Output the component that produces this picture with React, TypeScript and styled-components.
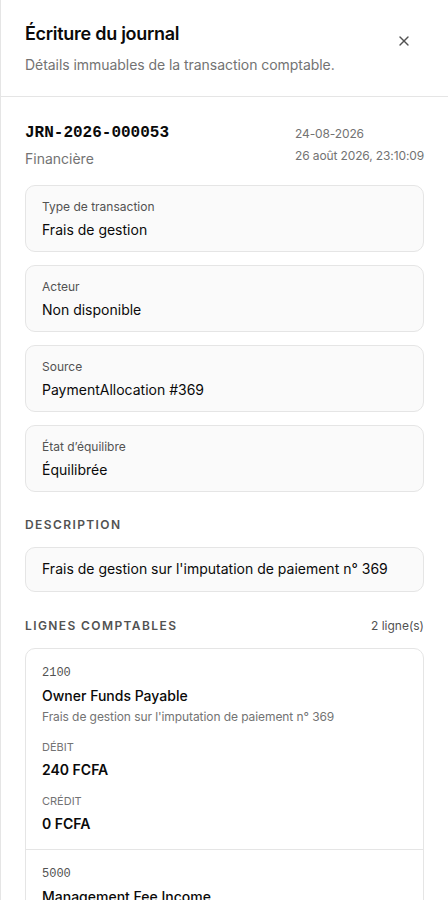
import React from "react";
import styled, { createGlobalStyle } from "styled-components";

const Global = createGlobalStyle`
  html, body { margin: 0; padding: 0; background: #ffffff; }
  body { font-family: Inter, "Noto Sans", sans-serif; color: #0a0a0a; -webkit-font-smoothing: antialiased; }
  * { box-sizing: border-box; }
`;

const Panel = styled.div`
  width: 448px;
  min-height: 900px;
  border-left: 1px solid #e5e5e5;
  background: #ffffff;
`;

const Header = styled.header`
  display: flex;
  justify-content: space-between;
  align-items: flex-start;
  padding: 20px 24px 21px 24px;
  border-bottom: 1px solid #e5e5e5;
`;

const HeaderText = styled.div`
  display: flex;
  flex-direction: column;
  gap: 7px;
`;

const Title = styled.h2`
  margin: 0;
  font-size: 18px;
  line-height: 28px;
  font-weight: 600;
  color: #0a0a0a;
  letter-spacing: -0.28px;
`;

const Subtitle = styled.p`
  margin: 0;
  font-size: 14px;
  line-height: 20px;
  color: #737373;
  letter-spacing: -0.05px;
`;

const CloseButton = styled.button`
  border: none;
  background: transparent;
  padding: 0;
  margin-top: 12px;
  margin-right: 11px;
  width: 18px;
  height: 18px;
  display: flex;
  align-items: center;
  justify-content: center;
  color: #525252;
  cursor: pointer;
`;

const Body = styled.div`
  padding: 24px 24px 24px 24px;
  display: flex;
  flex-direction: column;
`;

const TopRow = styled.div`
  display: flex;
  justify-content: space-between;
  align-items: flex-start;
  margin-bottom: 16px;
`;

const RefCol = styled.div`
  display: flex;
  flex-direction: column;
  gap: 4px;
`;

const DateCol = styled.div`
  display: flex;
  flex-direction: column;
  gap: 4px;
  padding-top: 4px;
`;

const Ref = styled.div`
  font-family: "Liberation Mono", "DejaVu Sans Mono", monospace;
  font-weight: 700;
  font-size: 16px;
  line-height: 24px;
  color: #0a0a0a;
`;

const Muted = styled.div`
  font-size: 14px;
  line-height: 20px;
  color: #737373;
`;

const DateText = styled.div`
  font-size: 12px;
  line-height: 18px;
  color: #737373;
  letter-spacing: -0.12px;
`;

const Stack = styled.div`
  display: flex;
  flex-direction: column;
  gap: 13px;
`;

const InfoCard = styled.div`
  border: 1px solid #e5e5e5;
  border-radius: 10px;
  background: #fafafa;
  padding: 13px 16px 11px;
  display: flex;
  flex-direction: column;
  gap: 5px;
`;

const InfoLabel = styled.div`
  font-size: 12px;
  line-height: 16px;
  color: #525252;
`;

const InfoValue = styled.div`
  font-size: 14px;
  line-height: 20px;
  color: #0a0a0a;
`;

const Section = styled.section<{ $top: number }>`
  margin-top: ${(p) => p.$top}px;
  display: flex;
  flex-direction: column;
  gap: 14px;
`;

const SectionHead = styled.div`
  display: flex;
  justify-content: space-between;
  align-items: center;
`;

const SectionTitle = styled.div`
  font-size: 12px;
  line-height: 16px;
  font-weight: 600;
  letter-spacing: 1.4px;
  text-transform: uppercase;
  color: #525252;
`;

const Count = styled.div`
  font-size: 12px;
  line-height: 16px;
  color: #525252;
`;

const DescBox = styled.div`
  border: 1px solid #e5e5e5;
  border-radius: 10px;
  background: #fafafa;
  padding: 11px 16px 12px;
  font-size: 14px;
  line-height: 20px;
  color: #0a0a0a;
`;

const LinesCard = styled.div`
  border: 1px solid #e5e5e5;
  border-radius: 10px;
  background: #ffffff;
  overflow: hidden;
`;

const LineItem = styled.div`
  padding: 16px 16px 15px;
  display: flex;
  flex-direction: column;
  & + & { border-top: 1px solid #e5e5e5; }
`;

const Code = styled.div`
  font-family: "Liberation Mono", "DejaVu Sans Mono", monospace;
  font-size: 12px;
  line-height: 16px;
  color: #525252;
`;

const Account = styled.div`
  margin-top: 5px;
  font-size: 14px;
  line-height: 20px;
  font-weight: 500;
  color: #0a0a0a;
`;

const LineDesc = styled.div`
  margin-top: 3px;
  font-size: 12px;
  line-height: 16px;
  color: #737373;
  letter-spacing: -0.08px;
`;

const Amounts = styled.div`
  margin-top: 14px;
  display: flex;
  flex-direction: column;
  gap: 13px;
`;

const AmountBlock = styled.div`
  display: flex;
  flex-direction: column;
  gap: 5px;
`;

const AmountLabel = styled.div`
  font-size: 11px;
  line-height: 16px;
  text-transform: uppercase;
  color: #737373;
`;

const AmountValue = styled.div`
  font-size: 14px;
  line-height: 20px;
  font-weight: 600;
  color: #0a0a0a;
`;

const info = [
  { label: "Type de transaction", value: "Frais de gestion" },
  { label: "Acteur", value: "Non disponible" },
  { label: "Source", value: "PaymentAllocation #369" },
  { label: "État d’équilibre", value: "Équilibrée" },
];

const lines = [
  {
    code: "2100",
    account: "Owner Funds Payable",
    desc: "Frais de gestion sur l'imputation de paiement n° 369",
    debit: "240 FCFA",
    credit: "0 FCFA",
  },
  {
    code: "5000",
    account: "Management Fee Income",
    desc: "Frais de gestion sur l'imputation de paiement n° 369",
    debit: "0 FCFA",
    credit: "240 FCFA",
  },
];

export default function App() {
  return (
    <>
      <Global />
      <Panel>
        <Header>
          <HeaderText>
            <Title>Écriture du journal</Title>
            <Subtitle>Détails immuables de la transaction comptable.</Subtitle>
          </HeaderText>
          <CloseButton aria-label="Fermer">
            <svg width="16" height="16" viewBox="0 0 24 24" fill="none" stroke="currentColor" strokeWidth="2" strokeLinecap="round" strokeLinejoin="round">
              <path d="M18 6 6 18" />
              <path d="m6 6 12 12" />
            </svg>
          </CloseButton>
        </Header>
        <Body>
          <TopRow>
            <RefCol>
              <Ref>JRN-2026-000053</Ref>
              <Muted>Financière</Muted>
            </RefCol>
            <DateCol>
              <DateText>24-08-2026</DateText>
              <DateText>26 août 2026, 23:10:09</DateText>
            </DateCol>
          </TopRow>
          <Stack>
            {info.map((i) => (
              <InfoCard key={i.label}>
                <InfoLabel>{i.label}</InfoLabel>
                <InfoValue>{i.value}</InfoValue>
              </InfoCard>
            ))}
          </Stack>
          <Section $top={25}>
            <SectionHead>
              <SectionTitle>Description</SectionTitle>
            </SectionHead>
            <DescBox>Frais de gestion sur l'imputation de paiement n° 369</DescBox>
          </Section>
          <Section $top={26}>
            <SectionHead>
              <SectionTitle>Lignes comptables</SectionTitle>
              <Count>2 ligne(s)</Count>
            </SectionHead>
            <LinesCard>
              {lines.map((l) => (
                <LineItem key={l.code}>
                  <Code>{l.code}</Code>
                  <Account>{l.account}</Account>
                  <LineDesc>{l.desc}</LineDesc>
                  <Amounts>
                    <AmountBlock>
                      <AmountLabel>Débit</AmountLabel>
                      <AmountValue>{l.debit}</AmountValue>
                    </AmountBlock>
                    <AmountBlock>
                      <AmountLabel>Crédit</AmountLabel>
                      <AmountValue>{l.credit}</AmountValue>
                    </AmountBlock>
                  </Amounts>
                </LineItem>
              ))}
            </LinesCard>
          </Section>
        </Body>
      </Panel>
    </>
  );
}
